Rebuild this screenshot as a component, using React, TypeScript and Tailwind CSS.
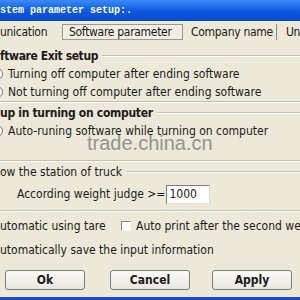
import React from "react";

function Radio() {
  return <span className="-ml-[9px] mr-[5px] w-[12px] h-[12px] shrink-0 rounded-full border border-[#6b7a8c] bg-white" />;
}

function Etched() {
  return <div className="h-[2px] border-t border-[#c3c0ae] border-b border-b-white" />;
}

function Header({ text, bold = true }: { text: string; bold?: boolean }) {
  return (
    <div className="h-[20px] flex items-center whitespace-nowrap">
      <span className={bold ? "font-bold tracking-[-0.3px] shrink-0" : "shrink-0"}>{text}</span>
      <div className="flex-1 ml-[4px] h-[2px] border-t border-[#c3c0ae] border-b border-b-white" />
    </div>
  );
}

function Btn({ label, cls }: { label: string; cls: string }) {
  return (
    <div
      className={
        "w-[80px] h-[20px] shrink-0 flex items-center justify-center font-bold rounded-[3px] border border-[#7d7d78] bg-linear-to-b from-[#fbfbf8] to-[#e9e7dd] " +
        cls
      }
    >
      {label}
    </div>
  );
}

export default function App() {
  return (
    <div className="relative w-[300px] h-[300px] overflow-hidden bg-[#ece9d8] text-[#1b1b1b] font-['DejaVu_Sans_Condensed','Liberation_Sans',sans-serif] text-[12px] leading-none">
      {/* title bar */}
      <div className="h-[21px] flex items-center bg-linear-to-b from-[#3b8af4] via-[#0c5be4] to-[#0a48c8]">
        <span className="font-['Liberation_Mono',monospace] font-bold text-[10px] text-white whitespace-nowrap">
          stem parameter setup:.
        </span>
      </div>
      {/* tabs */}
      <div className="h-[26px] flex items-start pt-[3px] whitespace-nowrap tracking-[-0.3px]">
        <div className="w-[62px] shrink-0 h-[16px] flex items-center">unication</div>
        <div className="w-[121px] shrink-0 h-[16px] flex items-center pl-[6px] border border-[#9a9a90] bg-[#f1efe4]">
          Software parameter
        </div>
        <div className="w-[94px] shrink-0 h-[16px] flex items-center pl-[8px] border-r border-r-[#8c8c84]">
          Company name
        </div>
        <div className="shrink-0 h-[16px] flex items-center pl-[9px]">Un</div>
      </div>
      {/* group 1 */}
      <div className="h-[18px] flex items-center whitespace-nowrap">
        <span className="font-bold tracking-[-0.4px] shrink-0">ftware Exit setup</span>
        <div className="flex-1 ml-[4px] h-[2px] border-t border-[#c3c0ae] border-b border-b-white" />
      </div>
      <div className="h-[17px] flex items-center whitespace-nowrap">
        <Radio />
        <span>Turning off computer after ending software</span>
      </div>
      <div className="h-[19px] flex items-center whitespace-nowrap">
        <Radio />
        <span>Not turning off computer after ending software</span>
      </div>
      <Etched />
      {/* group 2 */}
      <Header text="up in turning on computer" />
      <div className="h-[16px] flex items-center whitespace-nowrap">
        <Radio />
        <span>Auto-runing software while turning on computer</span>
      </div>
      <div className="h-[21px]" />
      <Etched />
      {/* group 3 */}
      <Header text="ow the station of truck" bold={false} />
      <div className="h-[24px] flex items-center pl-[17px] whitespace-nowrap">
        <span className="shrink-0">According weight judge &gt;=</span>
        <div className="ml-[1px] w-[44px] shrink-0 h-[19px] flex items-center pl-[2px] bg-white border border-t-[#7f7d74] border-l-[#7f7d74] border-r-[#e0ded4] border-b-[#e0ded4]">
          1000
        </div>
      </div>
      <div className="h-[4px]" />
      <Etched />
      {/* checks */}
      <div className="h-[28px] flex items-center whitespace-nowrap">
        <span className="w-[121px] shrink-0">utomatic using tare</span>
        <span className="w-[10px] h-[10px] shrink-0 bg-white border border-t-[#8a887e] border-l-[#8a887e] border-r-[#f4f3ee] border-b-[#f4f3ee]" />
        <span className="ml-[5px] shrink-0">Auto print after the second we</span>
      </div>
      <div className="h-[20px] flex items-center whitespace-nowrap">
        <span>utomatically save the input information</span>
      </div>
      <div className="h-[10px]" />
      {/* buttons */}
      <div className="h-[20px] flex">
        <Btn label="Ok" cls="ml-[5px]" />
        <Btn label="Cancel" cls="ml-[25px]" />
        <Btn label="Apply" cls="ml-[22px]" />
      </div>
      <div className="h-[7px]" />
      <div className="h-[3px] bg-[#1c4fc4]" />
      {/* watermark */}
      <div className="absolute left-[87px] top-[133px] font-['Liberation_Sans',sans-serif] text-[20px] leading-none text-[#7e7e7e] opacity-80 pointer-events-none">
        trade.china.cn
      </div>
    </div>
  );
}
